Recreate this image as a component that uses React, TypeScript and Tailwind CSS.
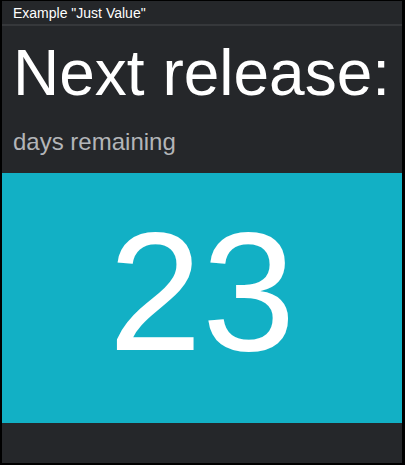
export default function App() {
  return (
    <div className="w-[405px] h-[465px] bg-black pt-px pl-[2px]" style={{ fontFamily: '"Liberation Sans", Arial, sans-serif' }}>
      <div className="w-[400px] h-[462px] bg-[#25272a] flex flex-col">
        {/* header */}
        <div className="h-[25px] border-b-2 border-[#36383b] px-[11px] flex items-center">
          <span className="text-[14px] leading-none text-white">Example "Just Value"</span>
        </div>

        {/* title */}
        <div className="px-[11px] pt-[12px]">
          <div className="text-[64px] leading-[71px] text-white whitespace-nowrap">Next release:</div>
          <div className="mt-[19px] text-[24px] leading-[27px] text-[#b3b5b8]">days remaining</div>
        </div>

        {/* value */}
        <div className="mt-[18px] h-[250px] bg-[#12b0c5] flex items-center justify-center pb-[12px]">
          <span className="text-[168px] leading-none text-white">23</span>
        </div>

        <div className="flex-1" />
      </div>
    </div>
  );
}
